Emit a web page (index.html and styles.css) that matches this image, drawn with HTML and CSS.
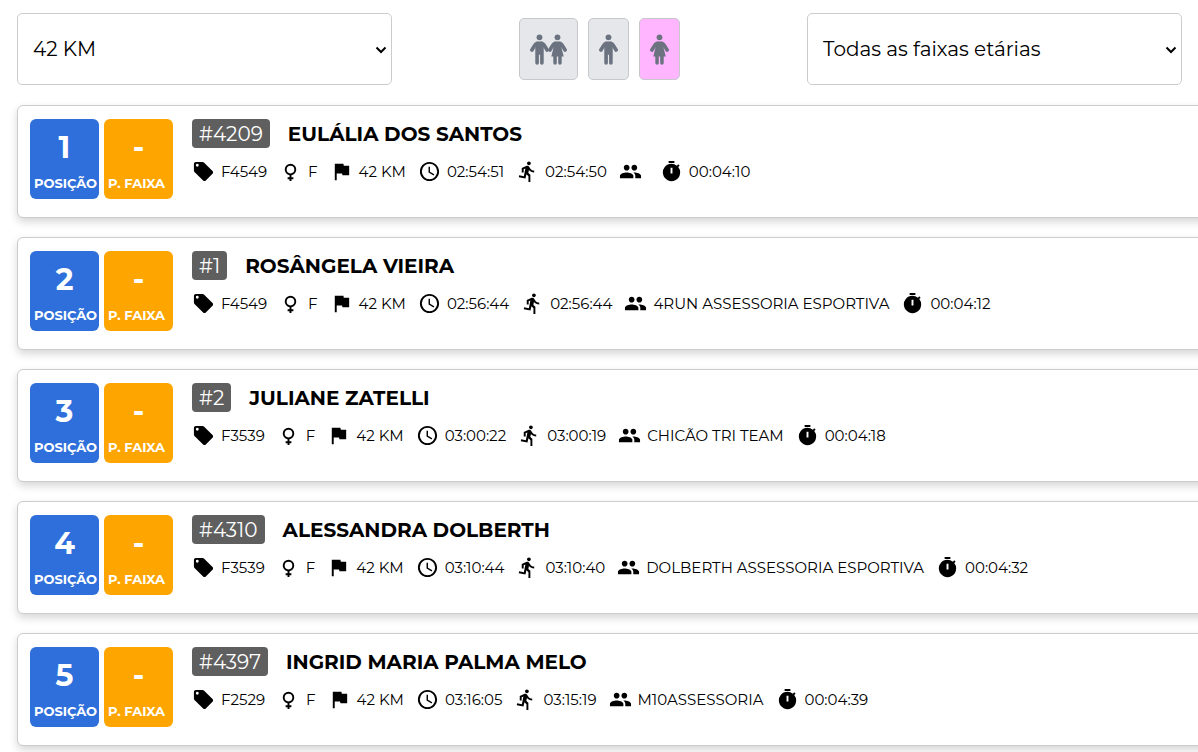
FILE: index.html
```
<!DOCTYPE html>
<html lang="pt-BR">
<head>
<meta charset="utf-8">
<meta name="viewport" content="width=device-width, initial-scale=1">
<title>Resultados 42 KM</title>
<link rel="stylesheet" href="styles.css">
</head>
<body>
<svg class="sprite" aria-hidden="true">
  <symbol id="tag" viewBox="0 0 24 24"><path d="M5.5 7A1.5 1.5 0 1 1 5.5 4a1.5 1.5 0 0 1 0 3m15.91 4.58-9-9C12.05 2.22 11.55 2 11 2H4c-1.1 0-2 .9-2 2v7c0 .55.22 1.05.59 1.41l9 9c.36.36.86.59 1.41.59s1.05-.22 1.41-.59l7-7c.37-.36.59-.86.59-1.41s-.23-1.06-.59-1.42z"/></symbol>
  <symbol id="female" viewBox="0 0 24 24"><path d="M12 4a6 6 0 0 1 6 6c0 2.970-2.160 5.440-5 5.920V18h2v2h-2v2h-2v-2H9v-2h2v-2.080A6 6 0 0 1 12 4m0 2a4 4 0 1 0 0 8 4 4 0 0 0 0-8z"/></symbol>
  <symbol id="flag" viewBox="0 0 24 24"><path d="M14.4 6 14 4H5v17h2v-7h5.600l.4 2h7V6z"/></symbol>
  <symbol id="clock" viewBox="0 0 24 24"><path d="M11.990 2C6.470 2 2 6.480 2 12s4.470 10 9.990 10C17.520 22 22 17.520 22 12S17.520 2 11.990 2M12 20a8 8 0 1 1 0-16 8 8 0 0 1 0 16m.5-13H11v6l5.250 3.150.750-1.230-4.500-2.670z"/></symbol>
  <symbol id="run" viewBox="0 0 24 24"><path d="M13.490 5.480c1.100 0 2-.900 2-2s-.900-2-2-2-2 .900-2 2 .900 2 2 2m-3.600 13.900 1-4.400 2.100 2v6h2v-7.500l-2.100-2 .600-3c1.300 1.500 3.300 2.500 5.500 2.500v-2c-1.900 0-3.500-1-4.300-2.400l-1-1.600c-.400-.600-1-1-1.700-1-.300 0-.500.100-.800.100l-5.200 2.200v4.700h2v-3.400l1.800-.700-1.600 8.100-4.900-1-.400 2z"/></symbol>
  <symbol id="group" viewBox="0 0 24 24"><path d="M16 11c1.660 0 2.990-1.340 2.990-3S17.660 5 16 5s-3 1.340-3 3 1.340 3 3 3m-8 0c1.660 0 2.990-1.340 2.990-3S9.660 5 8 5 5 6.340 5 8s1.340 3 3 3m0 2c-2.330 0-7 1.170-7 3.500V19h14v-2.500c0-2.330-4.670-3.500-7-3.500m8 0c-.290 0-.620.020-.970.050C16.190 13.890 17 15.020 17 16.500V19h6v-2.500c0-2.330-4.670-3.500-7-3.500z"/></symbol>
  <symbol id="timer" viewBox="0 0 24 24"><path d="M15 1H9v2h6zm4.030 6.390 1.420-1.420c-.430-.510-.900-.990-1.410-1.410l-1.420 1.420A8.960 8.960 0 0 0 12 4a9 9 0 1 0 7.030 3.390M13 14h-2V8h2z"/></symbol>
  <symbol id="man" viewBox="0 0 19 31"><circle cx="9.500" cy="3.300" r="2.900"/><path d="M5.300 9.500Q6.300 7.400 8.500 7.400h2Q12.700 7.400 13.700 9.500V29a1.600 1.600 0 0 1-3.600 0v-8.300H8.900V29a1.600 1.600 0 0 1-3.600 0z"/><path d="M7.300 9.300Q5.500 10 4.500 11.600L1.900 16M11.700 9.300Q13.500 10 14.500 11.600L17.100 16" fill="none" stroke="#6b7280" stroke-width="3.600" stroke-linecap="round"/></symbol>
  <symbol id="woman" viewBox="0 0 19 31"><circle cx="9.500" cy="3.300" r="2.900"/><path d="M5.300 9.500Q6.300 7.400 8.500 7.400h2Q12.700 7.400 13.700 9.500V14.500l2 7.900h-2V29a1.600 1.600 0 0 1-3.500 0v-6.600H8.800V29a1.600 1.600 0 0 1-3.500 0v-6.600h-2l2-7.900z"/><path d="M7.300 9.300Q5.500 10 4.500 11.600L1.900 16M11.700 9.300Q13.500 10 14.500 11.600L17.100 16" fill="none" stroke="#6b7280" stroke-width="3.600" stroke-linecap="round"/></symbol>
</svg>
<main class="page">
  <form class="filters">
    <div class="field">
      <select class="select" aria-label="Distância"><option>42 KM</option></select>
      <svg class="chevron" viewBox="0 0 12 8" aria-hidden="true"><path d="M1.500 1.500 6 6l4.500-4.500"/></svg>
    </div>
    <div class="genders">
      <button class="gender" type="button" aria-label="Todos"><svg class="person"><use href="#man"/></svg><svg class="person"><use href="#woman"/></svg></button>
      <button class="gender" type="button" aria-label="Masculino"><svg class="person"><use href="#man"/></svg></button>
      <button class="gender gender-active" type="button" aria-label="Feminino" aria-pressed="true"><svg class="person"><use href="#woman"/></svg></button>
    </div>
    <div class="field">
      <select class="select" aria-label="Faixa etária"><option>Todas as faixas etárias</option></select>
      <svg class="chevron" viewBox="0 0 12 8" aria-hidden="true"><path d="M1.500 1.500 6 6l4.500-4.500"/></svg>
    </div>
  </form>
  <section class="results" id="results"></section>
</main>
<script src="results.js"></script>
</body>
</html>
```
FILE: styles.css
```
* { box-sizing: border-box; }
body {
  margin: 0;
  background: #fff;
  color: #000;
  font-family: Montserrat, Inter, "Open Sans", sans-serif;
  overflow-x: hidden;
}
.sprite { display: none; }
.page { padding: 13px 16px 6px 17px; }
.filters {
  display: grid;
  grid-template-columns: 75fr 83fr 75fr;
  align-items: center;
  margin-bottom: 20px;
}
.field { position: relative; }
.select {
  display: block;
  width: 100%;
  height: 72px;
  padding: 0 24px 0 15px;
  border: 1px solid #ccc;
  border-radius: 5px;
  background-color: #fff;
  color: #000;
  font: inherit;
  font-size: 20px;
  appearance: none;
}
.chevron {
  position: absolute;
  top: 33px;
  right: 5px;
  width: 12px;
  height: 8px;
  fill: none;
  stroke: #000;
  stroke-width: 2;
  pointer-events: none;
}
.genders { display: flex; justify-content: center; gap: 10px; }
.gender {
  display: flex;
  align-items: center;
  height: 62px;
  padding: 0 10px;
  border: 1px solid #c6c8cc;
  border-radius: 5px;
  background: #e5e7eb;
}
.gender-active { background: #ffb5ff; }
.person { width: 19px; height: 31px; fill: #6b7280; }
.person + .person { margin-left: -1px; }
.results { display: grid; gap: 19px; margin-right: -32px; }
.card {
  display: flex;
  gap: 19px;
  min-height: 113px;
  padding: 13px 12px;
  border: 1px solid #ccc;
  border-radius: 6px;
  background: #fff;
  box-shadow: 0 4px 8px rgba(0, 0, 0, .16);
}
.ranks { display: flex; gap: 5px; }
.rank {
  display: flex;
  flex-direction: column;
  width: 69px;
  height: 80px;
  padding: 10px 0 0 4px;
  border-radius: 6px;
  background: #2f6fdb;
  color: #fff;
  font-weight: 700;
}
.rank-group { background: #ffa500; }
.rank-value {
  padding-right: 4px;
  font-size: 30px;
  line-height: 37px;
  text-align: center;
}
.rank-label { font-size: 13px; line-height: 35px; white-space: nowrap; }
.head { display: flex; align-items: center; gap: 18px; height: 29px; }
.bib {
  height: 29px;
  padding: 0 7px;
  border-radius: 4px;
  background: #5f5f5f;
  color: #fff;
  font-size: 20px;
  line-height: 30px;
}
.name { margin: 0; font-size: 20px; line-height: 30px; font-weight: 700; }
.facts {
  display: flex;
  gap: 12px;
  margin: 12px 0 0;
  padding: 0;
  list-style: none;
}
.fact {
  display: flex;
  align-items: center;
  gap: 6px;
  font-size: 15px;
  line-height: 23px;
  white-space: nowrap;
}
.icon { width: 23px; height: 23px; }
```
FILE: results.js
```
const runners = [
  ["4209", "EULÁLIA DOS SANTOS", "F4549", "02:54:51", "02:54:50", "", "00:04:10"],
  ["1", "ROSÂNGELA VIEIRA", "F4549", "02:56:44", "02:56:44", "4RUN ASSESSORIA ESPORTIVA", "00:04:12"],
  ["2", "JULIANE ZATELLI", "F3539", "03:00:22", "03:00:19", "CHICÃO TRI TEAM", "00:04:18"],
  ["4310", "ALESSANDRA DOLBERTH", "F3539", "03:10:44", "03:10:40", "DOLBERTH ASSESSORIA ESPORTIVA", "00:04:32"],
  ["4397", "INGRID MARIA PALMA MELO", "F2529", "03:16:05", "03:15:19", "M10ASSESSORIA", "00:04:39"],
];

const fact = (icon, text) =>
  `<li class="fact"><svg class="icon" aria-hidden="true"><use href="#${icon}"/></svg><span>${text}</span></li>`;

document.getElementById("results").innerHTML = runners.map(
  ([bib, name, group, gross, net, team, pace], i) => `
  <article class="card">
    <div class="ranks">
      <div class="rank"><span class="rank-value">${i + 1}</span><span class="rank-label">POSIÇÃO</span></div>
      <div class="rank rank-group"><span class="rank-value">-</span><span class="rank-label">P. FAIXA</span></div>
    </div>
    <div class="info">
      <div class="head"><span class="bib">#${bib}</span><h2 class="name">${name}</h2></div>
      <ul class="facts">
        ${fact("tag", group)}${fact("female", "F")}${fact("flag", "42 KM")}${fact("clock", gross)}${fact("run", net)}${fact("group", team)}${fact("timer", pace)}
      </ul>
    </div>
  </article>`
).join("");
```
